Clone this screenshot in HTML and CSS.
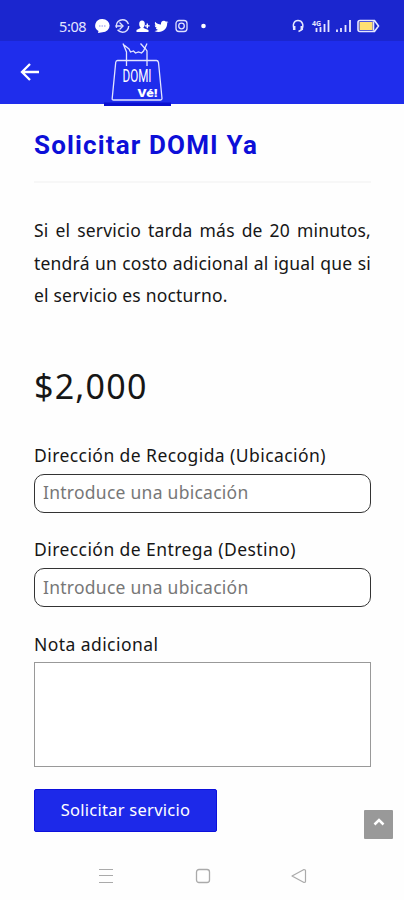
FILE: index.html
```html
<!DOCTYPE html>
<html lang="es">

<head>
    <meta charset="UTF-8">
    <meta name="viewport" content="width=device-width, initial-scale=1.0">
    <title>Solicitar DOMI Ya</title>
    <link rel="stylesheet" href="styles.css">
</head>

<body>
    <div class="screen">
        <div class="status-bar">
            <span class="clock">5:08</span>
            <svg class="status-notifications" width="154" height="16" viewBox="0 0 154 16">
                <!-- chat -->
                <path fill="#fff" d="M7.500 1a7 6.500 0 0 1 0 13.200L3 15l.5-2A7 6.500 0 0 1 7.500 1z" />
                <path stroke="#8a8df0" stroke-width="1.200" stroke-dasharray="1.500 1" d="M4 8h7" />
                <!-- sync -->
                <g fill="none" stroke="#dfe1ff" stroke-width="1.400">
                    <circle cx="27.500" cy="8" r="6.200" stroke-dasharray="15 2 19 3" />
                    <path d="M20.500 8h6M24.500 4.500L28 8l-3.500 3.500" />
                </g>
                <!-- add contact -->
                <g fill="#fff">
                    <ellipse cx="47" cy="6" rx="2.800" ry="3.500" />
                    <path d="M45.500 8h3v2l5 2v2h-12v-2l4-2zM50 7.200h1.600V5.500H53v1.700h1.600v1.400H53v1.700h-1.400V8.600H50z" />
                    <!-- bird -->
                    <path d="M73.500 4.200c-.4.300-.9.600-1.300.8.100 5.500-4 9.200-8.800 9-1.500 0-2.800-.4-4-1.100 1.500.1 2.800-.3 3.900-1.100-1.200-.1-2.100-.8-2.500-1.900h1.200c-1.300-.4-2.200-1.400-2.200-2.700l1.200.3c-1.200-1-1.500-2.500-.8-3.800 1.400 1.700 3.300 2.700 5.800 2.800-.4-2 1-3.700 2.900-3.700.9 0 1.500.3 2.100.9l1.800-.7-1.100 1.600z" />
                </g>
                <!-- camera -->
                <g fill="none" stroke="#dfe1ff" stroke-width="1.300">
                    <rect x="81" y="2.500" width="11" height="11" rx="3" />
                    <circle cx="86.500" cy="8" r="2.800" />
                </g>
                <circle cx="108.500" cy="8" r="2.300" fill="#fff" />
            </svg>
            <svg class="status-system" width="90" height="16" viewBox="0 0 90 16">
                <!-- headset -->
                <path fill="none" stroke="#e6e7ff" stroke-width="1.500" d="M2.500 11.500C0 7 2 2.500 6 2.500s6.500 4.500 3.500 9.500L6.500 13.500" />
                <path stroke="#e6e7ff" stroke-width="2.500" d="M2.200 8v4M9.800 8v4" />
                <!-- signal -->
                <text class="network" x="20" y="8">4G</text>
                <path stroke="#e6e7ff" stroke-width="1.800" d="M24.500 14v-4M28.500 14V9M32.500 14V6M36.500 14V2" />
                <path stroke="#e6e7ff" stroke-width="1.800" d="M45 14v-2.500M49 14v-4M53.500 14V7M58 14V2" />
                <!-- battery -->
                <path fill="none" stroke="#e6e7ff" stroke-width="1.600" d="M68 2.500h14.500L86.500 8l-4 5.500H68q-2 0-2-2v-7q0-2 2-2zM81.500 3.500v9" />
                <rect x="67.500" y="4" width="13" height="8" fill="#ffe071" />
            </svg>
        </div>

        <header class="app-bar">
            <svg class="back" width="20" height="18" viewBox="0 0 20 18">
                <path fill="none" stroke="#fff" stroke-width="2.300" d="M19 9H2M10 1L2 9l8 8" />
            </svg>
            <svg class="logo" width="67" height="65" viewBox="0 0 67 65">
                <path fill="#0b10d0" d="M0 61.500h67V65H0z" />
                <g fill="none" stroke="#e3e5ff" stroke-width="1.300">
                    <path d="M13.500 19.500h39q1.500 0 2 2L58 57.500q0 1.500-1.500 1.500h-47q-1.500 0-1.300-1.500l3.500-36q.3-2 1.800-2z" />
                    <path d="M22.500 25V11L19 2.500M20 4l5 4 1.500 3 3-1 2 2 3-1 3 1 2-2L43 2.500M36.500 2.500l5 5.500M43 25V10l-2-3" />
                </g>
                <text class="logo-domi" x="18.500" y="41" textLength="29" lengthAdjust="spacingAndGlyphs">DOMI</text>
                <text class="logo-ve" x="33.500" y="55.500" textLength="20" lengthAdjust="spacingAndGlyphs">Vé!</text>
            </svg>
        </header>

        <main class="content">
            <h1 class="title">Solicitar DOMI Ya</h1>
            <p class="notice">Si el servicio tarda más de 20 minutos, tendrá un costo adicional al igual que si el servicio es nocturno.</p>
            <div class="price">$2,000</div>

            <form class="form">
                <label class="label" for="pickup">Dirección de Recogida (Ubicación)</label>
                <input class="input" id="pickup" type="text" placeholder="Introduce una ubicación">
                <label class="label" for="delivery">Dirección de Entrega (Destino)</label>
                <input class="input" id="delivery" type="text" placeholder="Introduce una ubicación">
                <label class="label" for="note">Nota adicional</label>
                <textarea class="note" id="note"></textarea>
                <button class="submit" type="button">Solicitar servicio</button>
            </form>
        </main>

        <a class="to-top" href="#">
            <svg width="12" height="8" viewBox="0 0 12 8">
                <path fill="none" stroke="#fff" stroke-width="2.500" d="M1.500 6.500L6 2l4.500 4.500" />
            </svg>
        </a>

        <nav class="nav-bar">
            <svg width="16" height="16" viewBox="0 0 16 16">
                <path stroke="#aaa" stroke-width="1.200" d="M1 1.500h14M1 7.500h14M1 14.500h14" />
            </svg>
            <svg width="16" height="16" viewBox="0 0 16 16">
                <rect x="1.500" y="1.500" width="13" height="13" rx="2.500" fill="none" stroke="#aaa" stroke-width="1.300" />
            </svg>
            <svg width="16" height="16" viewBox="0 0 16 16">
                <path fill="none" stroke="#aaa" stroke-width="1.200" stroke-linejoin="round" d="M1 8L13 1.500q1.500 0 1.500 1v11q0 1-1.500 1z" />
            </svg>
        </nav>
    </div>
</body>

</html>
```

FILE: styles.css
```css
* {
    box-sizing: border-box;
}

body {
    margin: 0;
    background-color: #fefefe;
    color: #161616;
    font-family: "Noto Sans", "Open Sans", sans-serif;
}

.screen {
    position: relative;
    display: flex;
    flex-direction: column;
    width: 404px;
    height: 900px;
    overflow: hidden;
}

/* status bar */
.status-bar {
    display: flex;
    align-items: center;
    height: 41px;
    padding: 11px 22px 0 59px;
    background-color: #1b26cf;
}

.clock {
    width: 36px;
    color: #e3e5ff;
    font-size: 14.5px;
    line-height: 16px;
    letter-spacing: -.4px;
}

.status-system {
    margin-left: auto;
}

.network {
    fill: #e6e7ff;
    font-size: 7px;
    font-weight: bold;
}

/* app bar */
.app-bar {
    display: flex;
    height: 63px;
    padding-left: 20px;
    background-color: #1f2dec;
}

.back {
    margin-top: 22px;
}

.logo {
    margin-left: 64px;
    flex-shrink: 0;
}

.logo-domi {
    fill: #fff;
    font-family: Roboto, sans-serif;
    font-size: 18.5px;
}

.logo-ve {
    fill: #fff;
    font-family: Roboto, sans-serif;
    font-size: 10.5px;
    font-weight: 900;
}

/* content */
.content {
    display: flex;
    flex-direction: column;
    padding: 0 33px 0 34px;
}

.title {
    height: 79px;
    margin: 0;
    padding-top: 23px;
    border-bottom: 2px solid #f7f7f7;
    color: #0d0fd8;
    font-family: Roboto, sans-serif;
    font-size: 26px;
    font-weight: 700;
    line-height: 36px;
    letter-spacing: 1.15px;
}

.notice {
    margin: 31px 0 0;
    font-size: 17.5px;
    line-height: 32.5px;
    letter-spacing: .2px;
    text-align: justify;
}

.price {
    margin-top: 50px;
    font-size: 34px;
    line-height: 48px;
    letter-spacing: 1.2px;
}

.form {
    display: flex;
    flex-direction: column;
    align-items: flex-start;
    margin-top: 34px;
}

.label {
    height: 30px;
    font-size: 17.5px;
    line-height: 23px;
    letter-spacing: .43px;
}

.input {
    width: 337px;
    height: 39px;
    margin-bottom: 25.5px;
    padding: 0 8px 2px;
    border: 1.5px solid #333;
    border-radius: 10px;
    background-color: #fff;
    font-family: inherit;
    font-size: 17.5px;
    letter-spacing: .26px;
}

.input::placeholder {
    color: #777;
}

.note {
    width: 337px;
    height: 105px;
    margin-top: -1px;
    border: 1px solid #999;
    background-color: #fff;
    resize: none;
}

.submit {
    width: 183px;
    height: 43px;
    margin-top: 22px;
    padding: 0 0 2px;
    border: 1px solid #0c10dc;
    border-radius: 2px;
    background-color: #1d29e9;
    color: #fff;
    font-family: inherit;
    font-size: 16.5px;
    letter-spacing: .25px;
}

/* floats over the page */
.to-top {
    position: absolute;
    right: 11px;
    bottom: 61px;
    display: flex;
    justify-content: center;
    align-items: center;
    width: 29px;
    height: 29px;
    padding-bottom: 5px;
    border-radius: 1px;
    background-color: #999;
}

.nav-bar {
    display: flex;
    justify-content: space-between;
    margin-top: auto;
    padding: 0 97px 16px 98px;
}
```
